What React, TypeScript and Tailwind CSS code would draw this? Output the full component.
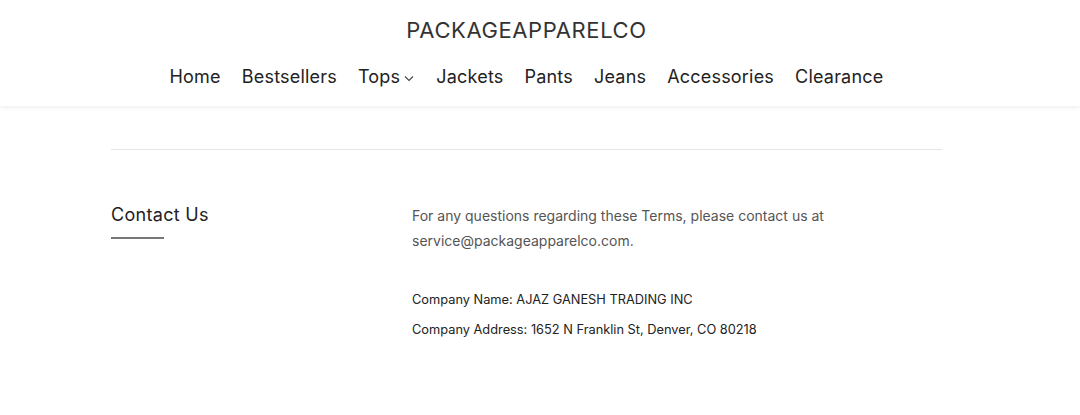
import React from 'react';

const navItems = ['Home', 'Bestsellers', 'Tops', 'Jackets', 'Pants', 'Jeans', 'Accessories', 'Clearance'];

const App: React.FC = () => {
  return (
    <div className="min-h-screen bg-white text-[#222] pr-[27px]" style={{ fontFamily: 'Inter, "Noto Sans", sans-serif' }}>
      {/* Header */}
      <header className="bg-white shadow-[0_2px_4px_rgba(0,0,0,0.06)] h-[106px] flex flex-col items-center -mr-[27px] pr-[27px]">
        <h1 className="mt-[16px] text-[22px] leading-[28px] tracking-[0.6px] text-[#333]">PACKAGEAPPARELCO</h1>
        <nav className="mt-[21px] flex items-center gap-[21px] text-[18px] leading-[24px] tracking-[0.2px]">
          {navItems.map((item) => (
            <a key={item} href="#" className="flex items-center text-[#222]">
              {item}
              {item === 'Tops' && (
                <svg width="12" height="12" viewBox="0 0 12 12" className="ml-[3px] mt-[2px]" fill="none" stroke="#444" strokeWidth="1.1">
                  <path d="M2 4.5 6 8.5 10 4.5" />
                </svg>
              )}
            </a>
          ))}
        </nav>
      </header>

      {/* Content */}
      <div className="mx-auto w-[831px]">
        <div className="mt-[43px] border-t border-[#e5e5e5]" />
        <div className="flex mt-[53px]">
          <div className="w-[301px] shrink-0">
            <h2 className="text-[18px] leading-[24px] tracking-[0.3px] text-[#222]">Contact Us</h2>
            <div className="mt-[10px] w-[53px] h-[2px] bg-[#777]" />
          </div>
          <div>
            <p className="text-[14px] leading-[25px] text-[#555]">
              For any questions regarding these Terms, please contact us at
              <br />
              service@packageapparelco.com.
            </p>
            <p className="mt-[38px] text-[12.8px] leading-[18px] text-[#222]">Company Name: AJAZ GANESH TRADING INC</p>
            <p className="mt-[12px] text-[12.8px] leading-[18px] text-[#222]">Company Address: 1652 N Franklin St, Denver, CO 80218</p>
          </div>
        </div>
      </div>
    </div>
  );
};

export default App;
